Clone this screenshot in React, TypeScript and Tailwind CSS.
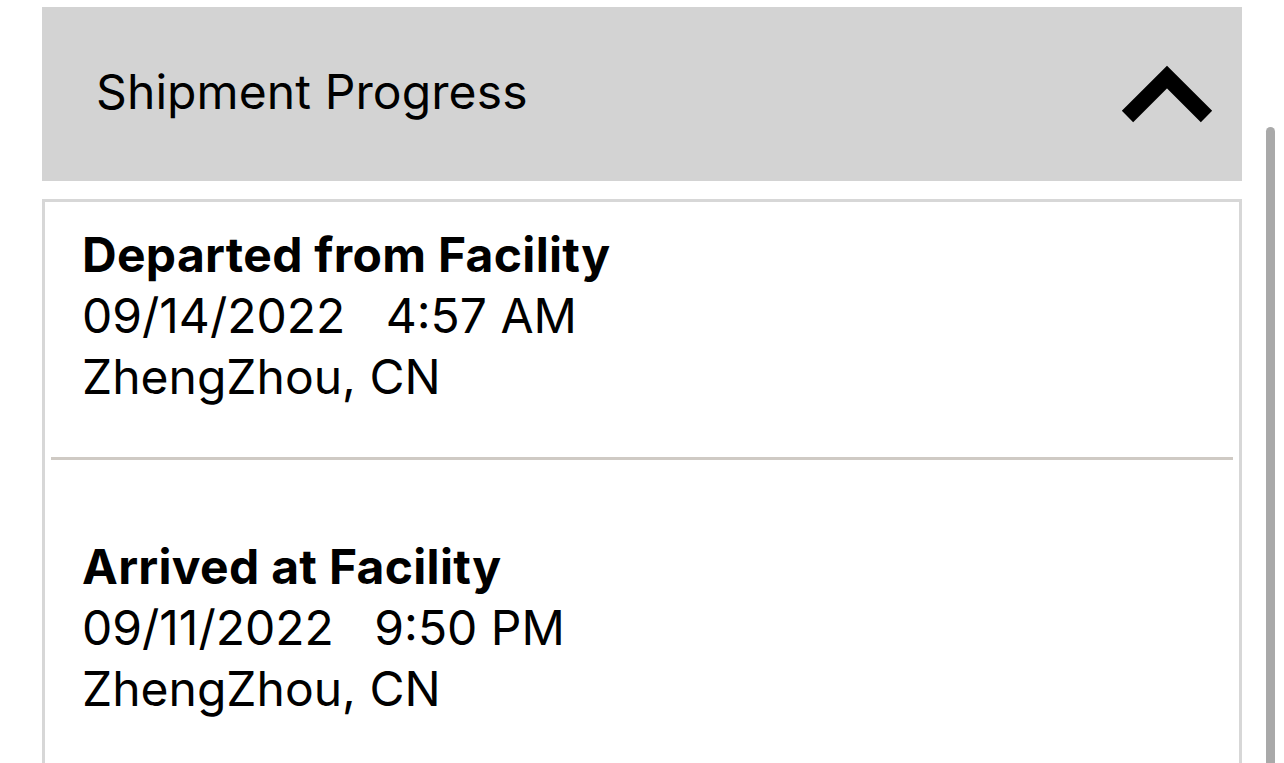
import React from 'react';

type Event = {
  status: string;
  date: string;
  time: string;
  place: string;
};

const events: Event[] = [
  { status: 'Departed from Facility', date: '09/14/2022', time: '4:57 AM', place: 'ZhengZhou, CN' },
  { status: 'Arrived at Facility', date: '09/11/2022', time: '9:50 PM', place: 'ZhengZhou, CN' },
];

const ChevronUp = () => (
  <svg width="92" height="60" viewBox="0 0 92 60" fill="none">
    <polyline
      points="6.5,52.5 46,13 85.5,52.5"
      stroke="#000"
      strokeWidth="16"
      strokeLinejoin="miter"
      strokeLinecap="butt"
    />
  </svg>
);

const App = () => {
  return (
    <div
      className="relative min-h-[763px] overflow-hidden bg-white text-black"
      style={{ fontFamily: 'Inter, "Noto Sans", sans-serif' }}
    >
      <div className="ml-[42px] w-[1200px] pt-[7px]">
        {/* Header */}
        <div className="flex h-[174px] items-center justify-between bg-[#d3d3d3] pl-[54px] pr-[29px]">
          <span className="mb-[4px] text-[48px] leading-none tracking-[0.1px]">Shipment Progress</span>
          <ChevronUp />
        </div>

        {/* Event list */}
        <div className="mt-[18px] border-[3px] border-[#d7d7d7] h-[600px]">
          {events.map((ev, i) => (
            <div key={i}>
              {i > 0 && <div className="mx-[6px] h-[3px] bg-[#cfcac4]" />}
              <div
                className={
                  i === 0
                    ? 'pl-[37px] pt-[22px] pb-[50px] text-[48px] leading-[61px]'
                    : 'pl-[37px] pt-[76px] pb-[50px] text-[48px] leading-[61px]'
                }
              >
                <div className="font-bold tracking-[0.3px]">{ev.status}</div>
                <div className="whitespace-pre">{ev.date + '   ' + ev.time}</div>
                <div>{ev.place}</div>
              </div>
            </div>
          ))}
        </div>
      </div>

      {/* Scroll indicator */}
      <div className="absolute left-[1266px] top-[127px] h-[700px] w-[9px] rounded-full bg-[#a9a9a9]" />
    </div>
  );
};

export default App;
